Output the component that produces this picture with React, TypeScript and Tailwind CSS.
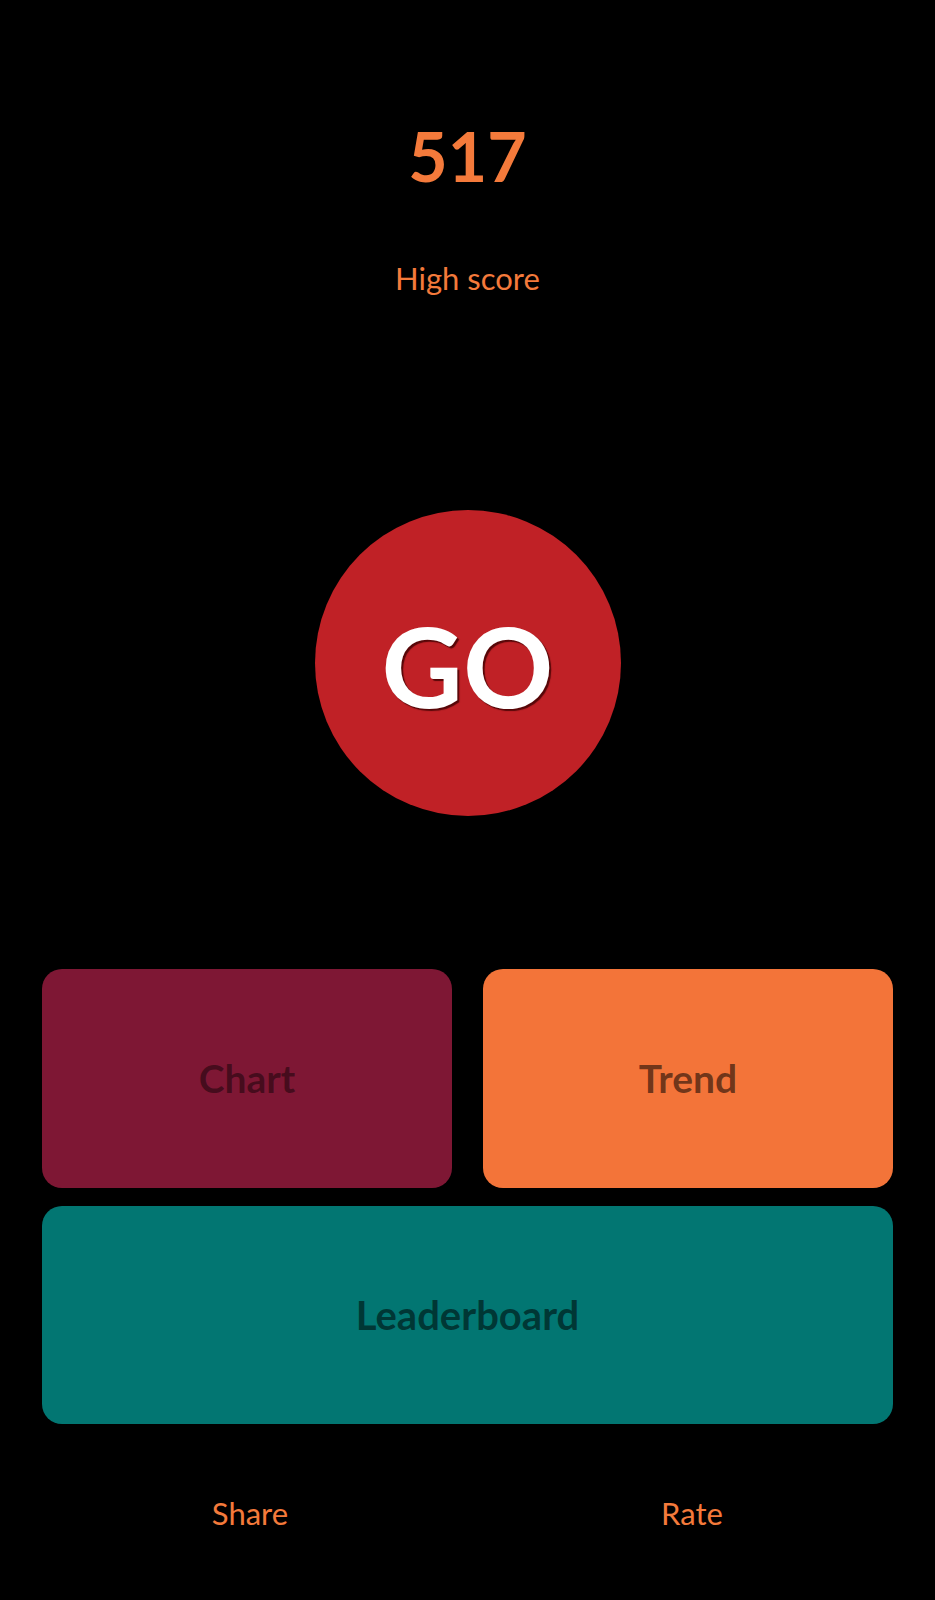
export default function App() {
  const font = { fontFamily: 'Lato, "Noto Sans", sans-serif' };

  return (
    <div className="min-h-screen w-full bg-black" style={font}>
      <div className="flex flex-col items-center pt-[122px]">
        <div className="text-[68px] leading-none h-[68px] font-bold text-[#f47a3b]">517</div>
        <div className="mt-[73px] text-[31px] leading-none h-[31px] text-[#f47a3b]">High score</div>

        <button className="mt-[216px] w-[306px] h-[306px] rounded-full bg-[#c02126] flex items-center justify-center pt-1">
          <span className="text-[112px] leading-none font-bold text-white [text-shadow:2px_2px_1px_rgba(60,0,0,0.8)]">
            GO
          </span>
        </button>
      </div>

      <div className="px-[42px] mt-[153px]">
        <div className="grid grid-cols-2 gap-x-[31px] gap-y-[18px]">
          <button className="h-[219px] rounded-[20px] bg-[#7e1734] text-[39px] font-bold text-black/45">
            Chart
          </button>
          <button className="h-[219px] rounded-[20px] bg-[#f37439] text-[39px] font-bold text-black/55">
            Trend
          </button>
          <button className="col-span-2 h-[218px] rounded-[20px] bg-[#027672] text-[40px] font-bold text-black/55">
            Leaderboard
          </button>
        </div>

        <div className="grid grid-cols-2 gap-x-[31px] mt-[74px] ml-[4px]">
          <button className="text-[31px] leading-none h-[31px] text-[#f47a3b]">Share</button>
          <button className="pl-[6px] text-[31px] leading-none h-[31px] text-[#f47a3b]">Rate</button>
        </div>
      </div>
    </div>
  );
}
